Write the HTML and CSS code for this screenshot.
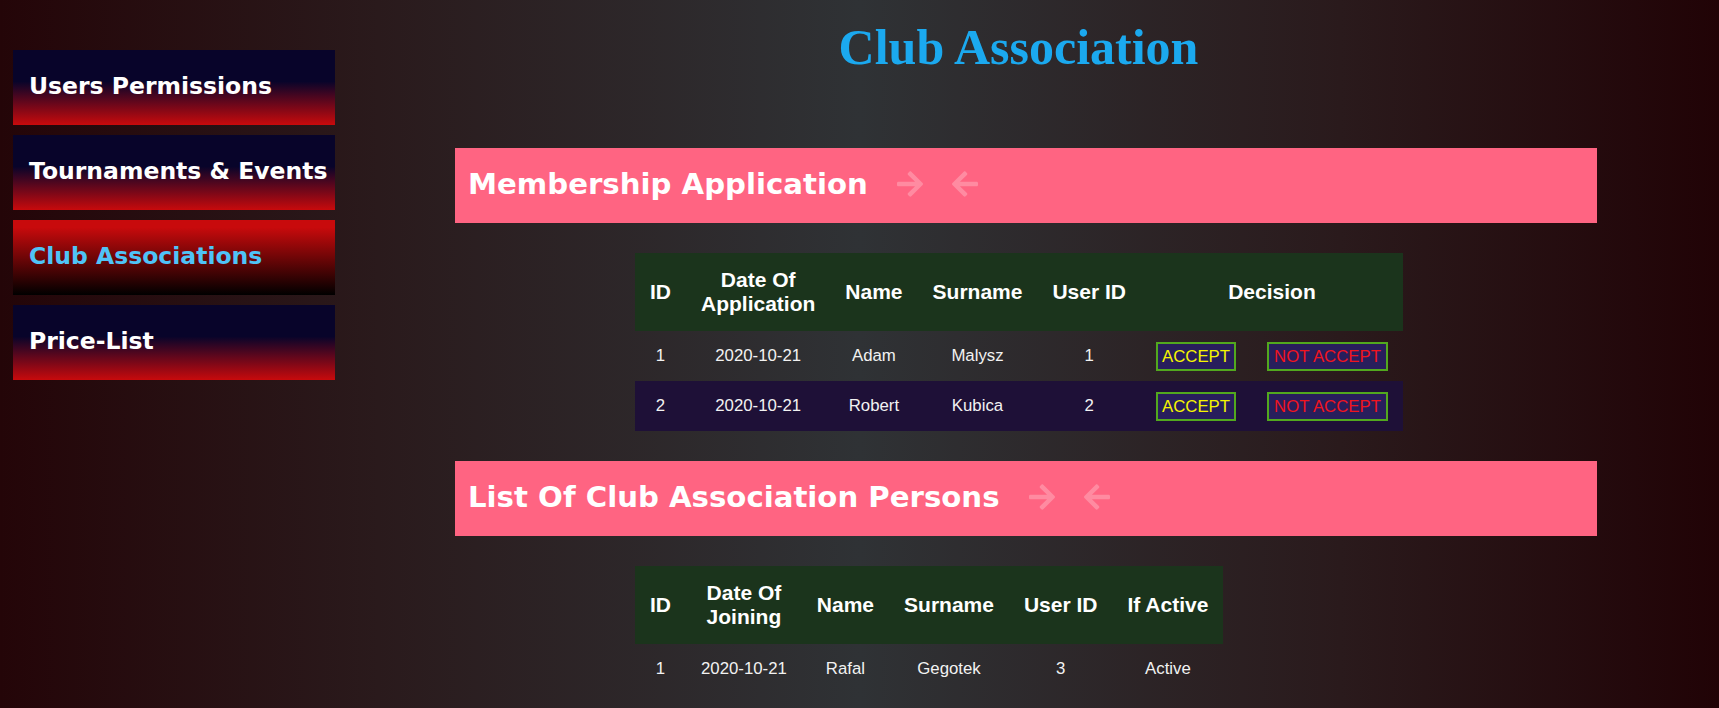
FILE: index.html
```html
<!DOCTYPE html>
<html lang="en">
<head>
<meta charset="utf-8">
<title>Club Association</title>
<link rel="stylesheet" href="styles.css">
</head>
<body>
<div class="page">
  <nav class="sidebar">
    <a class="nav-item">Users Permissions</a>
    <a class="nav-item">Tournaments &amp; Events</a>
    <a class="nav-item active">Club Associations</a>
    <a class="nav-item">Price-List</a>
  </nav>
  <main class="main">
    <h1 class="title">Club Association</h1>

    <div class="band band-first">
      <h2 class="band-title">Membership Application</h2>
      <svg class="arrow" viewBox="0 0 448 512"><path d="M190.5 66.9l22.2-22.2c9.4-9.4 24.6-9.4 33.9 0L441 239c9.4 9.4 9.4 24.6 0 33.9L246.6 467.3c-9.4 9.4-24.6 9.4-33.9 0l-22.2-22.2c-9.5-9.5-9.3-25 .4-34.3L311.4 296H24c-13.3 0-24-10.7-24-24v-32c0-13.3 10.7-24 24-24h287.4L190.9 101.2c-9.8-9.3-10-24.8-.4-34.3z"/></svg>
      <svg class="arrow" viewBox="0 0 448 512"><path d="M257.5 445.1l-22.2 22.2c-9.4 9.4-24.6 9.4-33.9 0L7 273c-9.4-9.4-9.4-24.6 0-33.9L201.4 44.7c9.4-9.4 24.6-9.4 33.9 0l22.2 22.2c9.5 9.5 9.3 25-.4 34.3L136.6 216H424c13.3 0 24 10.7 24 24v32c0 13.3-10.7 24-24 24H136.6l120.5 114.8c9.8 9.3 10 24.8.4 34.3z"/></svg>
    </div>

    <table class="data">
      <thead>
        <tr>
          <th>ID</th>
          <th>Date Of<br>Application</th>
          <th>Name</th>
          <th>Surname</th>
          <th>User ID</th>
          <th>Decision</th>
        </tr>
      </thead>
      <tbody>
        <tr>
          <td>1</td>
          <td>2020-10-21</td>
          <td>Adam</td>
          <td>Malysz</td>
          <td>1</td>
          <td class="decision"><span class="btn btn-accept">ACCEPT</span><span class="btn btn-reject">NOT ACCEPT</span></td>
        </tr>
        <tr class="alt">
          <td>2</td>
          <td>2020-10-21</td>
          <td>Robert</td>
          <td>Kubica</td>
          <td>2</td>
          <td class="decision"><span class="btn btn-accept">ACCEPT</span><span class="btn btn-reject">NOT ACCEPT</span></td>
        </tr>
      </tbody>
    </table>

    <div class="band">
      <h2 class="band-title">List Of Club Association Persons</h2>
      <svg class="arrow" viewBox="0 0 448 512"><path d="M190.5 66.9l22.2-22.2c9.4-9.4 24.6-9.4 33.9 0L441 239c9.4 9.4 9.4 24.6 0 33.9L246.6 467.3c-9.4 9.4-24.6 9.4-33.9 0l-22.2-22.2c-9.5-9.5-9.3-25 .4-34.3L311.4 296H24c-13.3 0-24-10.7-24-24v-32c0-13.3 10.7-24 24-24h287.4L190.9 101.2c-9.8-9.3-10-24.8-.4-34.3z"/></svg>
      <svg class="arrow" viewBox="0 0 448 512"><path d="M257.5 445.1l-22.2 22.2c-9.4 9.4-24.6 9.4-33.9 0L7 273c-9.4-9.4-9.4-24.6 0-33.9L201.4 44.7c9.4-9.4 24.6-9.4 33.9 0l22.2 22.2c9.5 9.5 9.3 25-.4 34.3L136.6 216H424c13.3 0 24 10.7 24 24v32c0 13.3-10.7 24-24 24H136.6l120.5 114.8c9.8 9.3 10 24.8.4 34.3z"/></svg>
    </div>

    <table class="data">
      <thead>
        <tr>
          <th>ID</th>
          <th>Date Of<br>Joining</th>
          <th>Name</th>
          <th>Surname</th>
          <th>User ID</th>
          <th>If Active</th>
        </tr>
      </thead>
      <tbody>
        <tr>
          <td>1</td>
          <td>2020-10-21</td>
          <td>Rafal</td>
          <td>Gegotek</td>
          <td>3</td>
          <td>Active</td>
        </tr>
      </tbody>
    </table>
  </main>
</div>
</body>
</html>
```

FILE: styles.css
```css
html, body {
  margin: 0;
  padding: 0;
  height: 100%;
}

body {
  background: linear-gradient(to right, #240508 0%, #2a1a1c 22%, #2f3235 50%, #2a1a1c 78%, #210306 100%);
  font-family: "Liberation Sans", Arial, sans-serif;
  color: #ffffff;
  overflow: hidden;
}

.page {
  display: flex;
  align-items: flex-start;
}

.sidebar {
  display: flex;
  flex-direction: column;
  gap: 10px;
  padding: 50px 0 0 13px;
  width: 322px;
  flex: none;
}

.nav-item {
  display: block;
  box-sizing: border-box;
  height: 75px;
  padding: 22px 0 0 16px;
  font-family: "DejaVu Sans", sans-serif;
  font-weight: 700;
  font-size: 23.5px;
  line-height: 28px;
  color: #ffffff;
  white-space: nowrap;
  background: linear-gradient(to bottom, #08042a 42%, #c80a0c 100%);
}

.nav-item.active {
  color: #4fc3f7;
  background: linear-gradient(to bottom, #c80a0c 10%, #000000 100%);
}

.main {
  flex: 1;
  padding-right: 17px;
}

.title {
  margin: 18px 0 0;
  text-align: center;
  font-family: "Liberation Serif", "Times New Roman", serif;
  font-weight: 700;
  font-size: 50px;
  line-height: 58px;
  color: #1ba9ef;
}

.band {
  display: flex;
  align-items: center;
  box-sizing: border-box;
  width: 1142px;
  height: 75px;
  margin: 30px 0 0 120px;
  padding: 0 0 4px 13px;
  background: #ff6482;
}

.band-first {
  margin-top: 72px;
}

.band-title {
  margin: 0;
  font-family: "DejaVu Sans", sans-serif;
  font-weight: 700;
  font-size: 29.2px;
  line-height: 34px;
  padding-top: 1px;
  color: #ffffff;
  white-space: nowrap;
}

.arrow {
  width: 26px;
  height: 30px;
  margin-left: 29px;
  fill: rgba(255, 255, 255, 0.25);
  flex: none;
}

.data {
  border-collapse: collapse;
  border-spacing: 0;
  margin: 30px 0 0 300px;
}

.data th {
  height: 78px;
  padding: 0 15px;
  background: #1b341c;
  font-size: 21px;
  font-weight: 700;
  line-height: 24px;
  text-align: center;
  color: #ffffff;
}

.data td {
  height: 50px;
  padding: 0 15px;
  font-size: 16.8px;
  text-align: center;
  color: #f2f2f2;
}

.data tr.alt td {
  background: #1e1037;
}

.data td.decision {
  white-space: nowrap;
}

.btn {
  display: inline-block;
  padding: 3px 4px;
  border: 2px solid #52a81e;
  background: #281e5c;
  font-size: 16.8px;
  line-height: 19px;
  vertical-align: middle;
}

.btn + .btn {
  margin-left: 31px;
}

.btn-accept {
  color: #f5f500;
}

.btn-reject {
  color: #f0141e;
  padding: 3px 5px;
}
```
